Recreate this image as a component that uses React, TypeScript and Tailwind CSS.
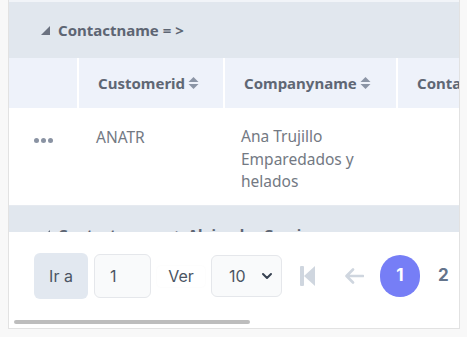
import { ChevronDown } from "lucide-react";

const cols = [
  { w: "w-[68px]", label: "" },
  { w: "w-[146px]", label: "Customerid" },
  { w: "w-[173px]", label: "Companyname" },
  { w: "w-[120px]", label: "Contactname" },
];

function SortIcon() {
  return (
    <svg width="11" height="14" viewBox="0 0 11 14" className="ml-[3px] shrink-0">
      <path d="M5.5 1 L10.5 6 H0.5 Z" fill="#8b95a5" />
      <path d="M5.5 13 L10.5 8 H0.5 Z" fill="#8b95a5" />
    </svg>
  );
}

function GroupRow({ label, h }: { label: string; h: string }) {
  return (
    <div className={`flex ${h} items-center bg-[#e1e7ee] pl-[32px] shrink-0`}>
      <svg width="9" height="9" viewBox="0 0 9 9" className="mr-[8px]">
        <path d="M9 0 V9 H0 Z" fill="#6b7280" />
      </svg>
      <span className="text-[15px] font-bold text-[#5d6573] whitespace-nowrap">{label}</span>
    </div>
  );
}

export default function App() {
  return (
    <div className="h-[337px] w-[467px] overflow-hidden bg-[#f8f8f8] font-['Noto_Sans',sans-serif]">
      <div className="ml-[8px] w-[452px] h-[329px] border-x border-b border-[#e2e2e2] bg-white flex flex-col">
        <div className="h-[232px] overflow-hidden flex flex-col shrink-0">
          <div className="h-[2px] bg-[#f1f4f8] shrink-0" />
          <GroupRow label="Contactname = >" h="h-[56px]" />
          <div className="flex h-[50px] bg-[#eef2fa] shrink-0">
            {cols.map((c, i) => (
              <div
                key={i}
                className={`${c.w} shrink-0 flex items-center pl-[19px] border-l-2 border-white first:border-l-0`}
              >
                {c.label && (
                  <>
                    <span className="text-[15px] font-bold text-[#5f6774]">{c.label}</span>
                    {i < 3 && <SortIcon />}
                  </>
                )}
              </div>
            ))}
          </div>
          <div className="flex h-[98px] bg-white border-b border-[#e6eaf0] shrink-0 text-[15.5px] text-[#737983] leading-[22.5px]">
            <div className="w-[68px] shrink-0 pl-[25px] pt-[30px]">
              <div className="flex gap-[2px]">
                <span className="w-[5px] h-[5px] rounded-full bg-[#8a93a3]" />
                <span className="w-[5px] h-[5px] rounded-full bg-[#8a93a3]" />
                <span className="w-[5px] h-[5px] rounded-full bg-[#8a93a3]" />
              </div>
            </div>
            <div className="w-[146px] shrink-0 pl-[19px] pt-[18px]">ANATR</div>
            <div className="w-[173px] shrink-0 pl-[18px] pt-[17px] pr-[36px]">
              Ana Trujillo Emparedados y helados
            </div>
          </div>
          <GroupRow label="Contactname = > Alejandra Camino" h="h-[56px]" />
        </div>

        <div className="flex-1 relative font-['Inter',sans-serif]">
          <div className="flex items-center h-[88px] pl-[25px]">
            <div className="w-[54px] h-[46px] rounded-md bg-[#e2e8f0] flex items-center justify-center text-[16px] text-[#4b5563]">
              Ir a
            </div>
            <div className="ml-[6px] w-[57px] h-[44px] rounded-md border border-[#e5e7eb] bg-[#f9fafb] flex items-center pl-[15px] text-[16px] text-[#4b5563]">
              1
            </div>
            <div className="ml-[6px] w-[48px] h-[21px] rounded bg-white shadow-[0_0_2px_rgba(0,0,0,0.04)] flex items-center justify-center text-[16px] text-[#4b5563]">
              Ver
            </div>
            <div className="ml-[6px] w-[71px] h-[42px] rounded-md border border-[#e5e7eb] bg-[#f9fafb] flex items-center justify-between pl-[17px] pr-[6px] text-[16px] text-[#4b5563]">
              <span>10</span>
              <ChevronDown size={16} strokeWidth={3} color="#374151" />
            </div>
            <svg width="15" height="20" viewBox="0 0 15 20" className="ml-[18px]">
              <rect x="0" y="0" width="4" height="20" rx="1" fill="#cfd6df" />
              <path d="M15 0 V20 L4 10 Z" fill="#cfd6df" />
            </svg>
            <svg width="19" height="16" viewBox="0 0 19 16" className="ml-[30px]">
              <path d="M18 8 H2 M8 1.5 L1.5 8 L8 14.5" stroke="#cfd6df" strokeWidth="2.6" fill="none" strokeLinecap="round" strokeLinejoin="round" />
            </svg>
            <div className="ml-[16px] w-[40px] h-[42px] rounded-full bg-[#767ef6] flex items-center justify-center text-white font-bold text-[17px]">
              1
            </div>
            <div className="ml-[18px] text-[17px] font-bold text-[#64748b]">2</div>
          </div>
          <div className="absolute left-[5px] top-[88px] w-[236px] h-[4px] bg-[#bdbdbd] rounded-sm" />
        </div>
      </div>
    </div>
  );
}
